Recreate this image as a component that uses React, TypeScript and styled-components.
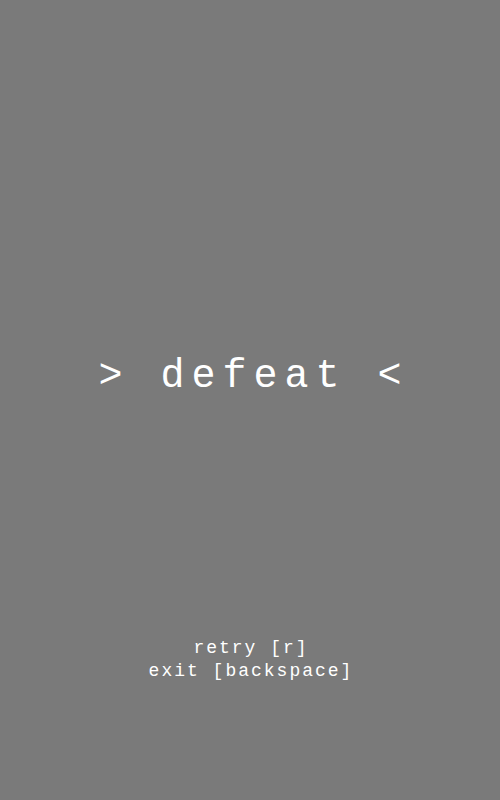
import React from "react";
import styled, { createGlobalStyle } from "styled-components";

const Global = createGlobalStyle`
  html, body { margin: 0; padding: 0; background: #7a7a7a; }
  #root { min-height: 100vh; }
`;

const Screen = styled.div`
  height: 100vh;
  display: grid;
  grid-template-rows: 1fr auto;
  background: #7a7a7a;
  color: #ffffff;
  font-family: "Liberation Mono", "Courier New", monospace;
`;

const Main = styled.main`
  display: flex;
  align-items: center;
  justify-content: center;
  padding-top: 116px;
`;

const Title = styled.h1`
  margin: 0 -7px 0 0;
  font-size: 40px;
  line-height: 48px;
  font-weight: normal;
  letter-spacing: 7px;
  white-space: pre;
`;

const Footer = styled.footer`
  display: flex;
  flex-direction: column;
  align-items: center;
  padding-bottom: 117px;
`;

const Hint = styled.div`
  margin-right: -2px;
  font-size: 18px;
  line-height: 23px;
  letter-spacing: 2px;
  white-space: pre;
`;

export default function App() {
  return (
    <>
      <Global />
      <Screen>
        <Main>
          <Title>{"> defeat <"}</Title>
        </Main>
        <Footer>
          <Hint>retry [r]</Hint>
          <Hint>exit [backspace]</Hint>
        </Footer>
      </Screen>
    </>
  );
}
